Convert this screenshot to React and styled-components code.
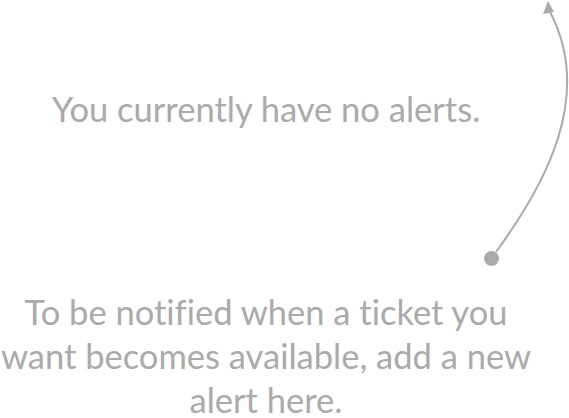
import React from 'react';
import styled, { createGlobalStyle } from 'styled-components';

const GlobalStyle = createGlobalStyle`
  html, body {
    margin: 0;
    padding: 0;
    background: #fff;
  }
  body {
    font-family: Lato, "Open Sans", sans-serif;
  }
`;

const Page = styled.div`
  position: relative;
  width: 569px;
  height: 418px;
  overflow: hidden;
`;

const Content = styled.div`
  width: 540px;
  margin-left: -4px;
  display: flex;
  flex-direction: column;
  align-items: center;
  padding-top: 87px;
`;

const Message = styled.p`
  margin: 0;
  width: 100%;
  text-align: center;
  color: #aaaaaa;
  font-size: 34.5px;
  line-height: 44px;
  font-variant-ligatures: none;
  margin-top: ${(p) => p.gap || 0}px;
`;

const Pointer = styled.svg`
  position: absolute;
  top: 0;
  left: 0;
  pointer-events: none;
`;

function AlertPointer() {
  return (
    <Pointer width="569" height="418" viewBox="0 0 569 418">
      <path
        d="M496 252 C545 185, 595 95, 549 10"
        fill="none"
        stroke="#aaaaaa"
        strokeWidth="2"
      />
      <polygon points="548,1 543,14 554,12" fill="#aaaaaa" />
      <circle cx="491.5" cy="258.5" r="7.5" fill="#aaaaaa" />
    </Pointer>
  );
}

export default function App() {
  return (
    <Page>
      <GlobalStyle />
      <Content>
        <Message>You currently have no alerts.</Message>
        <Message gap={159}>
          To be notified when a ticket you want becomes available, add a new alert here.
        </Message>
      </Content>
      <AlertPointer />
    </Page>
  );
}
